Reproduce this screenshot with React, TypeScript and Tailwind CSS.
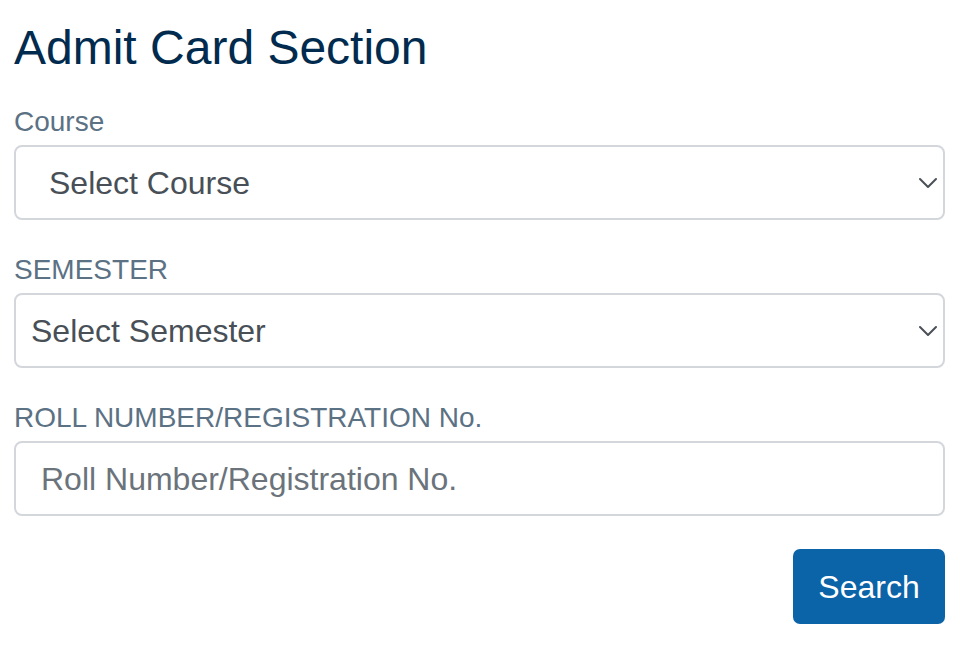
import React from "react";

function Chevron() {
  return (
    <svg
      width="18"
      height="11"
      viewBox="0 0 18 11"
      fill="none"
      className="pointer-events-none absolute right-[8px] top-1/2 -translate-y-1/2"
    >
      <path d="M1 1.5L9 9.5L17 1.5" stroke="#4a5057" strokeWidth="2" strokeLinecap="round" strokeLinejoin="round" />
    </svg>
  );
}

export default function App() {
  return (
    <div
      className="min-h-[668px] w-full bg-white pl-[14px] pr-[21px] pt-[19px]"
      style={{ fontFamily: '"Liberation Sans", Arial, Helvetica, sans-serif' }}
    >
      <h1 className="m-0 text-[48px] leading-[58px] font-normal text-[#002b4e]">Admit Card Section</h1>

      <form className="mt-[28px] flex flex-col" onSubmit={(e) => e.preventDefault()}>
        <label className="mb-[6px] block text-[28px] leading-[34px] text-[#5b7184]">Course</label>
        <div className="relative">
          <select
            className="block h-[75px] w-full appearance-none rounded-[8px] border-2 border-[#d3d7dc] bg-white pl-[33px] pr-[40px] pt-[1px] text-[32px] leading-[38px] text-[#484f56] outline-none"
            defaultValue=""
          >
            <option value="">Select Course</option>
          </select>
          <Chevron />
        </div>

        <label className="mb-[6px] mt-[33px] block text-[28px] leading-[34px] text-[#5b7184]">SEMESTER</label>
        <div className="relative">
          <select
            className="block h-[75px] w-full appearance-none rounded-[8px] border-2 border-[#d3d7dc] bg-white pl-[15px] pr-[40px] pt-[1px] text-[32px] leading-[38px] text-[#484f56] outline-none"
            defaultValue=""
          >
            <option value="">Select Semester</option>
          </select>
          <Chevron />
        </div>

        <label className="mb-[6px] mt-[33px] block text-[28px] leading-[34px] text-[#5b7184]">
          ROLL NUMBER/REGISTRATION No.
        </label>
        <input
          type="text"
          placeholder="Roll Number/Registration No."
          className="block h-[75px] w-full rounded-[8px] border-2 border-[#d3d7dc] bg-white pl-[25px] pr-[16px] pt-[1px] text-[32px] leading-[38px] text-[#484f56] outline-none placeholder:text-[#6b737b]"
        />

        <div className="mt-[33px] flex justify-end">
          <button
            type="submit"
            className="flex h-[75px] w-[152px] items-center justify-center rounded-[7px] bg-[#0b63a8] text-[32px] leading-[38px] text-white"
          >
            Search
          </button>
        </div>
      </form>
    </div>
  );
}
